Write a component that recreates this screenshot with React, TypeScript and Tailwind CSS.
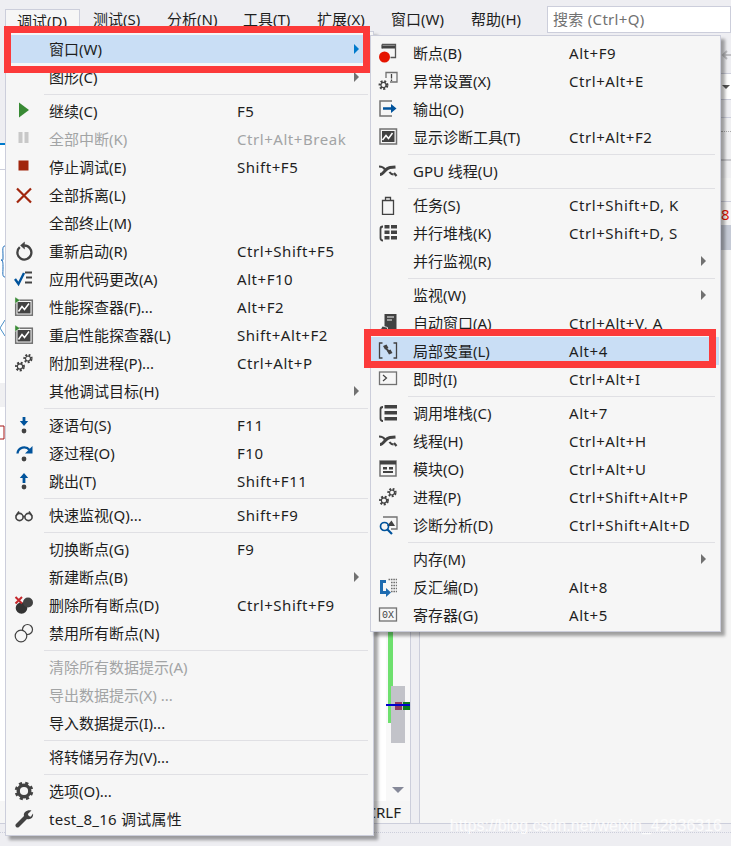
import type { ReactNode } from 'react'

type Item = { icon?: string; label?: string; keys?: string; off?: boolean; sub?: boolean; hot?: boolean; sep?: boolean; wide?: boolean }

const mainItems: Item[] = [
  { label: '窗口(W)', sub: true, hot: true },
  { label: '图形(C)', sub: true },
  { sep: true },
  { icon: 'play', label: '继续(C)', keys: 'F5' },
  { icon: 'pause', label: '全部中断(K)', keys: 'Ctrl+Alt+Break', off: true },
  { icon: 'stop', label: '停止调试(E)', keys: 'Shift+F5' },
  { icon: 'x', label: '全部拆离(L)' },
  { label: '全部终止(M)' },
  { icon: 'restart', label: '重新启动(R)', keys: 'Ctrl+Shift+F5' },
  { icon: 'apply', label: '应用代码更改(A)', keys: 'Alt+F10' },
  { icon: 'perf', label: '性能探查器(F)...', keys: 'Alt+F2' },
  { icon: 'perf', label: '重启性能探查器(L)', keys: 'Shift+Alt+F2' },
  { icon: 'gears', label: '附加到进程(P)...', keys: 'Ctrl+Alt+P' },
  { label: '其他调试目标(H)', sub: true },
  { sep: true },
  { icon: 'stepin', label: '逐语句(S)', keys: 'F11' },
  { icon: 'stepover', label: '逐过程(O)', keys: 'F10' },
  { icon: 'stepout', label: '跳出(T)', keys: 'Shift+F11' },
  { sep: true },
  { icon: 'glasses', label: '快速监视(Q)...', keys: 'Shift+F9' },
  { sep: true },
  { label: '切换断点(G)', keys: 'F9' },
  { label: '新建断点(B)', sub: true },
  { icon: 'delbp', label: '删除所有断点(D)', keys: 'Ctrl+Shift+F9' },
  { icon: 'disbp', label: '禁用所有断点(N)' },
  { sep: true },
  { label: '清除所有数据提示(A)', off: true },
  { label: '导出数据提示(X) ...', off: true },
  { label: '导入数据提示(I)...' },
  { sep: true },
  { label: '将转储另存为(V)...' },
  { sep: true },
  { icon: 'gear', label: '选项(O)...' },
  { icon: 'wrench', label: 'test_8_16 调试属性', wide: true },
]

const subItems: Item[] = [
  { icon: 'bp', label: '断点(B)', keys: 'Alt+F9' },
  { icon: 'exc', label: '异常设置(X)', keys: 'Ctrl+Alt+E' },
  { icon: 'output', label: '输出(O)' },
  { icon: 'diag', label: '显示诊断工具(T)', keys: 'Ctrl+Alt+F2' },
  { sep: true },
  { icon: 'threads', label: 'GPU 线程(U)' },
  { sep: true },
  { icon: 'tasks', label: '任务(S)', keys: 'Ctrl+Shift+D, K' },
  { icon: 'pstack', label: '并行堆栈(K)', keys: 'Ctrl+Shift+D, S' },
  { label: '并行监视(R)', sub: true },
  { sep: true },
  { label: '监视(W)', sub: true },
  { icon: 'autos', label: '自动窗口(A)', keys: 'Ctrl+Alt+V, A' },
  { icon: 'locals', label: '局部变量(L)', keys: 'Alt+4', hot: true },
  { icon: 'immediate', label: '即时(I)', keys: 'Ctrl+Alt+I' },
  { sep: true },
  { icon: 'callstack', label: '调用堆栈(C)', keys: 'Alt+7' },
  { icon: 'threads', label: '线程(H)', keys: 'Ctrl+Alt+H' },
  { icon: 'modules', label: '模块(O)', keys: 'Ctrl+Alt+U' },
  { icon: 'gears', label: '进程(P)', keys: 'Ctrl+Shift+Alt+P' },
  { icon: 'analyze', label: '诊断分析(D)', keys: 'Ctrl+Shift+Alt+D' },
  { sep: true },
  { label: '内存(M)', sub: true },
  { icon: 'disasm', label: '反汇编(D)', keys: 'Alt+8' },
  { icon: 'regs', label: '寄存器(G)', keys: 'Alt+5' },
]

const topMenus = [
  { label: '测试(S)', cls: 'w-[74px]' },
  { label: '分析(N)', cls: 'w-[76px]' },
  { label: '工具(T)', cls: 'w-[74px]' },
  { label: '扩展(X)', cls: 'w-[74px]' },
  { label: '窗口(W)', cls: 'w-[80px]' },
  { label: '帮助(H)', cls: 'w-[76px]' },
]

const G = '#424242'

function Gear({ x, y, r }: { x: number; y: number; r: number }) {
  return (
    <g>
      <circle cx={x} cy={y} r={r} fill="none" stroke={G} strokeWidth={r * 0.75} strokeDasharray={`${r * 0.5} ${r * 0.42}`} transform={`rotate(10 ${x} ${y})`} />
      <circle cx={x} cy={y} r={r * 0.72} fill="none" stroke={G} strokeWidth="1.1" />
    </g>
  )
}

const icons: Record<string, ReactNode> = {
  play: <path d="M5 1.500 15 9 5 16.500z" fill="#388a34" />,
  pause: (
    <g fill="#c8c8c8">
      <rect x="4.500" y="3" width="4" height="11" />
      <rect x="10.500" y="3" width="4" height="11" />
    </g>
  ),
  stop: <rect x="4.500" y="3.500" width="10" height="10" fill="#a1260d" />,
  x: <path d="M3 3.500 17 17.500M17 3.500 3 17.500" stroke="#a1260d" strokeWidth="2.200" fill="none" />,
  restart: (
    <g fill="none" stroke={G} strokeWidth="2.300">
      <path d="M5.800 6.200a7 7 0 1 0 4.400-1.700" />
      <path d="M10.500 1 6.500 4.400l4 3.600z" fill={G} strokeWidth="0.500" />
    </g>
  ),
  apply: (
    <g>
      <path d="M1 10l3.500 5L10 4" fill="none" stroke="#00539c" strokeWidth="2.400" />
      <path d="M11 3.500h7M12 8.500h6M11 13.500h7" stroke={G} strokeWidth="2" />
    </g>
  ),
  perf: (
    <g>
      <rect x="1.700" y="3.200" width="16.600" height="15" fill="#f6f6f6" stroke="#717171" strokeWidth="1.500" />
      <path d="M3.500 5h13v11.500h-13z" fill={G} />
      <path d="M4.500 14.500l3.500-5 2.500 3 4.500-6" fill="none" stroke="#fff" strokeWidth="1.500" />
      <path d="M1 0v6.500l5-3.200z" fill="#388a34" stroke="#f6f6f6" strokeWidth="0.400" />
    </g>
  ),
  gears: (
    <g>
      <Gear x={6} y={13.500} r={3.600} />
      <Gear x={14} y={5.500} r={3.400} />
    </g>
  ),
  stepin: (
    <g>
      <circle cx="10" cy="16" r="2.400" fill={G} />
      <path d="M8.600 2h2.800v4h2.800L10 11 5.800 6h2.800z" fill="#00539c" />
    </g>
  ),
  stepover: (
    <g>
      <circle cx="10" cy="16" r="2.400" fill={G} />
      <path d="M3.500 10.500C4 4 12 2.500 15.500 7" fill="none" stroke="#00539c" strokeWidth="2.300" />
      <path d="M18.500 3v7.500H11z" fill="#00539c" />
    </g>
  ),
  stepout: (
    <g>
      <circle cx="10" cy="16" r="2.400" fill={G} />
      <path d="M8.600 12V7H5.800L10 2l4.200 5h-2.800v5z" fill="#00539c" />
    </g>
  ),
  glasses: (
    <g fill="none" stroke={G} strokeWidth="1.600">
      <circle cx="5.500" cy="12" r="3.600" />
      <circle cx="14.500" cy="12" r="3.600" />
      <path d="M9 11.500h2M2 11 5 6.500M18 11l-3-4.500" />
    </g>
  ),
  delbp: (
    <g>
      <circle cx="7.500" cy="13" r="5.800" fill="#333" />
      <circle cx="14" cy="7.500" r="5" fill="#424242" />
      <path d="M1.500 2 8 8.500M8 2 1.500 8.500" stroke="#c5282d" strokeWidth="2" />
    </g>
  ),
  disbp: (
    <g fill="#f6f6f6" stroke={G} strokeWidth="1.200">
      <circle cx="13.500" cy="6.500" r="5" />
      <circle cx="7" cy="13" r="5.800" />
    </g>
  ),
  gear: (
    <g>
      <circle cx="10" cy="10" r="5.800" fill="none" stroke={G} strokeWidth="3.400" />
      <circle cx="10" cy="10" r="7.800" fill="none" stroke={G} strokeWidth="3" strokeDasharray="3.100 3" transform="rotate(8 10 10)" />
    </g>
  ),
  wrench: <path d="M17.500 1.500 13.800 5l1 2 2 .8L19 4.500C19.800 8.500 16.500 11 13 10L5 18c-2 1.800-4.800-1-3-3l8-8C9 3.500 13 .5 17.500 1.500z" fill={G} />,
  bp: (
    <g>
      <path d="M4 1.500h13.500v13H12.500M4 1.500v4" fill="none" stroke="#555" strokeWidth="1.300" />
      <path d="M4 2.500h13v3H4z" fill={G} />
      <circle cx="6.500" cy="14" r="5.500" fill="#e51400" />
    </g>
  ),
  exc: (
    <g>
      <path d="M8 7V1.500h11V11h-7" fill="#f6f6f6" stroke="#717171" strokeWidth="1.300" />
      <path d="M13.500 3v4.500M13.500 8.500v1.500" stroke={G} strokeWidth="1.300" />
      <Gear x={5.500} y={14} r={3.600} />
    </g>
  ),
  output: (
    <g>
      <path d="M14 2H2v15h12" fill="none" stroke="#717171" strokeWidth="1.500" />
      <path d="M5 8.200h8V5l5.500 4.500L13 14v-3.200H5z" fill="#00539c" />
    </g>
  ),
  diag: (
    <g>
      <rect x="2" y="2" width="16.500" height="15" fill="#f6f6f6" stroke="#717171" strokeWidth="1.500" />
      <rect x="4" y="4" width="12.500" height="11" fill={G} />
      <path d="M4.500 13 8 8.500l2.500 3 4-5.500" fill="none" stroke="#fff" strokeWidth="1.500" />
    </g>
  ),
  threads: (
    <g fill="none" stroke={G}>
      <path d="M2 13.500C6 13.500 7 7 12 6.500l5.500-.5" strokeWidth="3" />
      <path d="M1 5.500c2.500 0 4.500.5 6 3M11.500 11c1 1.500 2.500 2.500 4 2.500" strokeWidth="2.200" />
      <path d="M16 12l2.500 3" strokeWidth="2.200" />
    </g>
  ),
  tasks: (
    <g>
      <path d="M4.500 5.500h11v14h-11z" fill="#f6f6f6" stroke={G} strokeWidth="1.300" />
      <path d="M7.500 5.500V2.500h5v3" fill="none" stroke={G} strokeWidth="1.300" />
    </g>
  ),
  pstack: (
    <g fill={G}>
      <path d="M6.500 2h5v3.500h-5zM13 2h6v3.500h-6zM6.500 7.500h5V11h-5zM13 7.500h6V11h-6zM6.500 13h5v3.500h-5zM13 13h6v3.500h-6z" />
      <path d="M5 3.500C3 3.500 2.500 4 2.500 6v9c0 2 .5 2.500 2.500 2.500" fill="none" stroke={G} strokeWidth="1.800" />
    </g>
  ),
  autos: (
    <g>
      <path d="M6.500 1h12v18h-12z" fill={G} />
      <path d="M9 4h7M9 7h5" stroke="#f6f6f6" strokeWidth="1.200" />
      <path d="M1 18.500 4.500 13l5 1.500v4z" fill={G} stroke="#f6f6f6" strokeWidth="0.800" />
    </g>
  ),
  locals: (
    <g>
      <path d="M4.500 2H1.500v15h3M15.500 2h3v15h-3" fill="none" stroke={G} strokeWidth="1.300" />
      <path d="M5 5 8.500 3.500 10.500 7 7 8.500zM9 10l3.500-1.500 2 3.500-3.500 1.500z" fill={G} />
      <path d="M8 7.500l3 3" stroke={G} strokeWidth="1.800" />
    </g>
  ),
  immediate: (
    <g>
      <rect x="1.500" y="3" width="17" height="12.500" fill="#f6f6f6" stroke="#717171" strokeWidth="1.300" />
      <path d="M5 6l3.500 3L5 12" fill="none" stroke={G} strokeWidth="1.200" />
    </g>
  ),
  callstack: (
    <g fill={G}>
      <path d="M6.500 2H19v3.500H6.500zM6.500 8H19v3.500H6.500zM6.500 14H19v3.500H6.500z" />
      <path d="M5 4C3 4 2.500 4.500 2.500 6.500v9c0 2 .5 2.500 2.500 2.500" fill="none" stroke={G} strokeWidth="1.800" />
    </g>
  ),
  modules: (
    <g>
      <rect x="2" y="2" width="16" height="15" fill="#f6f6f6" stroke="#717171" strokeWidth="1.500" />
      <path d="M2 2h16v3.500H2zM5 8h4v2.500H5zM11 8h4v2.500h-4zM5 12h10v2H5z" fill={G} />
    </g>
  ),
  analyze: (
    <g>
      <path d="M5 2h14v12h-6" fill="#f6f6f6" stroke="#717171" strokeWidth="1.300" />
      <path d="M9 11 13.500 5.500 17 11z" fill={G} />
      <circle cx="6.500" cy="11.500" r="4" fill="none" stroke="#00539c" strokeWidth="1.700" />
      <path d="M9.500 14.500 14 19" stroke="#00539c" strokeWidth="2.200" />
    </g>
  ),
  disasm: (
    <g>
      <path d="M10.500 2.500H19M13 5.500h6M13 8.500h6M13 11.500h6M13 14.500h6" stroke="#717171" strokeWidth="1.300" strokeDasharray="1.600 0.800" />
      <path d="M2 3h6v3H5v8h3v-3l5 4.500L8 20v-3H2z" fill="#1e6bb0" />
    </g>
  ),
  regs: (
    <g>
      <rect x="1.500" y="3" width="17" height="13" fill="#f6f6f6" stroke="#717171" strokeWidth="1.300" />
      <text x="10" y="13" textAnchor="middle" fontSize="10" fontFamily="Liberation Mono, monospace" fill={G}>0X</text>
    </g>
  ),
}

function Rows({ items, iconCol, labelCol, sepPad }: { items: Item[]; iconCol: string; labelCol: string; sepPad: string }) {
  return (
    <>
      {items.map((it, i) =>
        it.sep ? (
          <div key={i} className={`h-[6px] flex items-center pr-[4px] ${sepPad}`}>
            <div className="h-px w-full bg-[#e0e0e4]" />
          </div>
        ) : (
          <div key={i} className={`h-7 flex items-center ${it.hot ? 'bg-[#c9def5]' : ''} ${it.off ? 'text-[#a2a4a5]' : 'text-[#1e1e1e]'}`}>
            <div className={`shrink-0 ${iconCol}`}>
              {it.icon && (
                <svg width="20" height="20" viewBox="0 0 20 20" className="block">
                  {icons[it.icon]}
                </svg>
              )}
            </div>
            <div className={`shrink-0 whitespace-nowrap ${labelCol} ${it.wide ? 'tracking-[0.25px]' : ''}`}>{it.label}</div>
            <div className="whitespace-nowrap flex-1 tracking-[0.55px]">{it.keys}</div>
            {it.sub && <div className={`w-0 h-0 mr-[13px] border-y-[5px] border-y-transparent border-l-[5px] ${it.hot ? 'border-l-[#007acc]' : 'border-l-[#717171]'}`} />}
          </div>
        ),
      )}
    </>
  )
}

export default function App() {
  return (
    <div className="relative w-[731px] h-[846px] overflow-hidden bg-[#eeeef2] text-[15px] leading-none font-['Noto_Sans','Noto_Sans_CJK_SC',sans-serif] text-[#1e1e1e]">
      {/* menu bar */}
      <div className="h-9 pt-[2px] flex items-center">
        <div className="w-[93px]" />
        {topMenus.map((m) => (
          <div key={m.label} className={m.cls}>{m.label}</div>
        ))}
        <div className="w-[184px] h-[27px] bg-white border border-[#cccedb] flex items-center pl-[5px] text-[#717171] whitespace-nowrap tracking-[0.3px]">搜索 (Ctrl+Q)</div>
      </div>

      {/* what is left of the ide behind the menus */}
      <div className="flex h-[788px] border-b border-[#cccedb]">
        <div className="w-[411px] bg-white border-r border-[#cccedb] flex flex-col">
          <div className="h-[109px] bg-[#eeeef2] border-b-2 border-[#007acc]" />
          <div className="h-[25px] border-b border-[#cccedb]" />
          <div className="h-[213px]" />
          <div className="h-[24px] bg-[#f0f0f2]" />
          <div className="flex-1 flex justify-end">
            <div className="w-[24px] bg-[#f8f8f8] flex flex-col items-center justify-end pb-[8px]">
              <div className="w-0 h-0 border-x-[6px] border-x-transparent border-t-[6px] border-t-[#868999]" />
            </div>
          </div>
          <div className="h-[22px] bg-[#f6f6f6] flex justify-end items-center pr-[9px]">
            <span className="pl-[2px]">CRLF</span>
          </div>
        </div>
        <div className="flex-1 pl-[8px] bg-[#eeeef2]">
          <div className="h-full border-l border-[#cccedb] bg-[#f5f5f5] flex flex-col items-end">
            <div className="w-[10px] h-[38px] bg-[#eeeef2] border-b border-[#cccedb] flex items-center">
              <svg width="10" height="10" viewBox="0 0 10 10" className="block">
                <path d="M6 1 2 5l4 4M2 5h8" fill="none" stroke="#c0c0c4" strokeWidth="2" />
              </svg>
            </div>
            <div className="w-[10px] h-[26px] bg-white border-b border-[#cccedb] flex items-center justify-center">
              <div className="w-0 h-0 border-x-[4px] border-x-transparent border-t-[4px] border-t-[#555]" />
            </div>
            <div className="w-[10px] h-[18px] bg-[#eeeef2] border-b border-[#cccedb]" />
            <div className="w-[10px] h-[60px] bg-[#f0f0f2] flex flex-col">
              <div className="mt-[13px] h-px border-t border-dotted border-[#aaaaaa]" />
              <div className="mt-[27px] h-[2px] bg-[#c8c8cc]" />
            </div>
            <div className="w-[10px] h-[24px] border-b border-[#cccedb]" />
            <div className="w-[10px] h-[23px] pt-[5px] text-[#e51400] whitespace-nowrap">8</div>
            <div className="w-[10px] h-[25px] bg-[#c5cad6]" />
          </div>
        </div>
      </div>
      <div className="h-[11px] mt-[8px] border-t border-[#cccedb] border-dotted" />

      {/* bits of code that stick out left of the menu */}
      <svg width="5" height="200" viewBox="0 0 5 200" className="absolute left-0 top-[240px]">
        <path d="M5 6C2 6 3 10 3 16S3 20 1 20c2 0 2 3 2 8s-1 9 2 9" fill="none" stroke="#1c6bb8" strokeWidth="1" />
        <path d="M5 80 0 88l5 8" fill="none" stroke="#4a90c8" strokeWidth="1" />
        <path d="M0 186h4v13H0" fill="none" stroke="#a31515" strokeWidth="1" />
      </svg>

      {/* scrollbar marks */}
      <div className="absolute left-[388px] top-[632px] w-[5px] h-[91px] bg-[#6ee06e]" />
      <div className="absolute left-[391px] top-[686px] w-[14px] h-[57px] bg-[#c2c3c9]" />
      <div className="absolute left-[395px] top-[702px] w-[7px] h-[8px] bg-[#8f3b5e]" />
      <div className="absolute left-[403px] top-[702px] w-[7px] h-[8px] bg-[#0a7a1e]" />
      <div className="absolute left-[386px] top-[704px] w-[24px] h-[2px] bg-[#0000cd]" />

      {/* watermark */}
      <div className="absolute right-[9px] top-[818px] text-[16px] text-white/80 whitespace-nowrap font-['Liberation_Sans',sans-serif]">https://blog.csdn.net/weixin_42836316</div>

      {/* main menu */}
      <div className="absolute left-[5px] top-[9px] w-[75px] h-[27px] bg-[#f6f6f6] border border-[#cccedb] border-b-0 pl-[11px] pt-[4px]">调试(D)</div>
      <div className="absolute left-[5px] top-[31px] w-[369px] h-[805px] pt-[3px] pl-[5px] pr-[1px] bg-[#f6f6f6] border border-[#cccedb] shadow-[4px_4px_3px_rgba(0,0,0,0.35)]">
        <Rows items={mainItems} iconCol="w-[38px] pl-[3px]" labelCol="w-[188px]" sepPad="pl-[33px]" />
      </div>

      {/* window submenu */}
      <div className="absolute left-[370px] top-[35px] w-[351px] h-[597px] pt-[3px] pr-[1px] bg-[#f6f6f6] border border-[#cccedb] shadow-[4px_4px_3px_rgba(0,0,0,0.35)]">
        <Rows items={subItems} iconCol="w-[42px] pl-[7px]" labelCol="w-[156px]" sepPad="pl-[37px]" />
      </div>

      {/* red marks drawn over the screenshot */}
      <div className="absolute left-[4px] top-[26px] w-[366px] h-[47px] border-[7px] border-[#fc3a3a]" />
      <div className="absolute left-[364px] top-[329px] w-[352px] h-[39px] border-[7px] border-[#fc3a3a]" />
    </div>
  )
}
